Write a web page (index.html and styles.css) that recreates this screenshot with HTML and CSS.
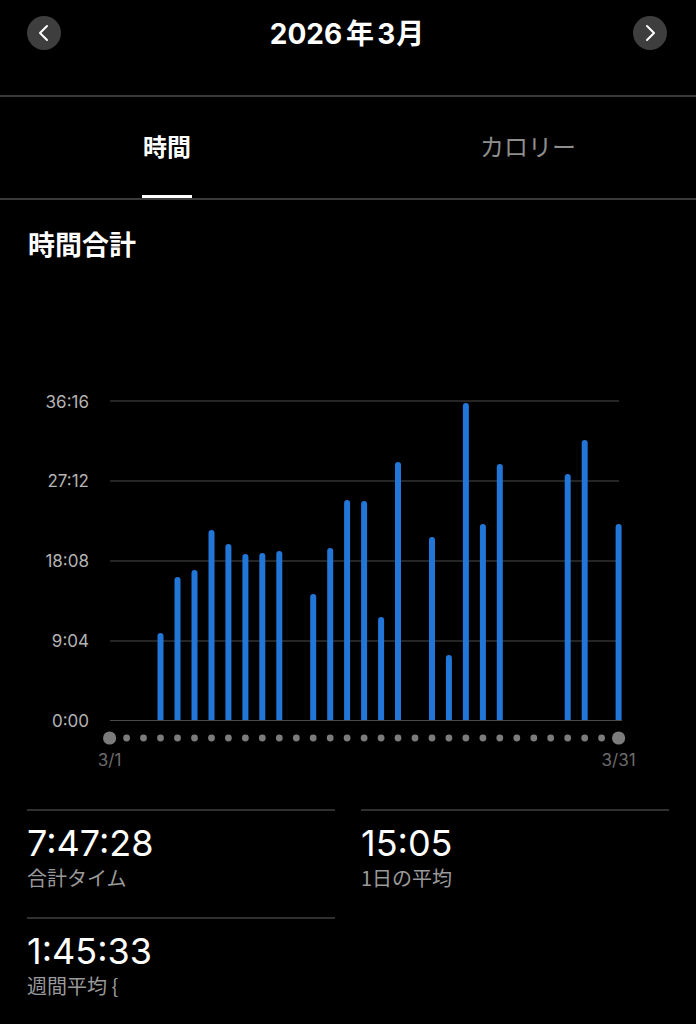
FILE: index.html
```html
<!DOCTYPE html>
<html lang="ja">
<head>
<meta charset="utf-8">
<title>2026年3月</title>
<link rel="stylesheet" href="styles.css">
</head>
<body>
<div class="page">
  <header class="header">
    <button class="nav-btn" aria-label="前へ">
      <svg width="34" height="34" viewBox="0 0 34 34"><path d="M20 10 L13 17 L20 24" fill="none" stroke="#fff" stroke-width="2" stroke-linecap="round" stroke-linejoin="round"/></svg>
    </button>
    <h1 class="month">2026<span class="kanji">年</span>3<span class="kanji2">月</span></h1>
    <button class="nav-btn" aria-label="次へ">
      <svg width="34" height="34" viewBox="0 0 34 34"><path d="M14 10 L21 17 L14 24" fill="none" stroke="#fff" stroke-width="2" stroke-linecap="round" stroke-linejoin="round"/></svg>
    </button>
  </header>

  <nav class="tabs">
    <div class="tab active">時間</div>
    <div class="tab tab-right">カロリー</div>
  </nav>

  <section class="summary">
    <h2 class="section-title">時間合計</h2>
    <svg class="chart" width="696" height="410" viewBox="0 370 696 410">
      <defs>
        <clipPath id="plot"><rect x="0" y="370" width="696" height="350"/></clipPath>
      </defs>
      <g class="grid">
        <line x1="110" y1="401" x2="619" y2="401"/>
        <line x1="110" y1="481" x2="619" y2="481"/>
        <line x1="110" y1="561" x2="619" y2="561"/>
        <line x1="110" y1="641" x2="619" y2="641"/>
        <line x1="110" y1="720.5" x2="622" y2="720.5"/>
      </g>
      <g class="ylabels">
        <text x="89" y="407.5">36:16</text>
        <text x="89" y="487">27:12</text>
        <text x="89" y="567">18:08</text>
        <text x="89" y="647">9:04</text>
        <text x="89" y="726.5">0:00</text>
      </g>
      <g class="bars" clip-path="url(#plot)">
        <line x1="160.5" y1="636" x2="160.5" y2="726"/>
        <line x1="177.5" y1="580" x2="177.5" y2="726"/>
        <line x1="194.5" y1="573" x2="194.5" y2="726"/>
        <line x1="211.5" y1="533" x2="211.5" y2="726"/>
        <line x1="228.4" y1="547" x2="228.4" y2="726"/>
        <line x1="245.4" y1="557" x2="245.4" y2="726"/>
        <line x1="262.3" y1="556" x2="262.3" y2="726"/>
        <line x1="279.3" y1="554" x2="279.3" y2="726"/>
        <line x1="313.2" y1="597" x2="313.2" y2="726"/>
        <line x1="330.2" y1="551" x2="330.2" y2="726"/>
        <line x1="347.1" y1="503" x2="347.1" y2="726"/>
        <line x1="364.1" y1="504" x2="364.1" y2="726"/>
        <line x1="381.1" y1="620" x2="381.1" y2="726"/>
        <line x1="398.0" y1="465" x2="398.0" y2="726"/>
        <line x1="432.0" y1="540" x2="432.0" y2="726"/>
        <line x1="448.9" y1="658" x2="448.9" y2="726"/>
        <line x1="465.9" y1="406" x2="465.9" y2="726"/>
        <line x1="482.9" y1="527" x2="482.9" y2="726"/>
        <line x1="499.8" y1="467" x2="499.8" y2="726"/>
        <line x1="567.7" y1="477" x2="567.7" y2="726"/>
        <line x1="584.7" y1="443" x2="584.7" y2="726"/>
        <line x1="618.6" y1="527" x2="618.6" y2="726"/>
      </g>
      <g class="dots">
        <circle cx="109.6" cy="738" r="6.6"/>
        <circle cx="126.6" cy="738" r="3.4"/>
        <circle cx="143.5" cy="738" r="3.4"/>
        <circle cx="160.5" cy="738" r="3.4"/>
        <circle cx="177.5" cy="738" r="3.4"/>
        <circle cx="194.5" cy="738" r="3.4"/>
        <circle cx="211.5" cy="738" r="3.4"/>
        <circle cx="228.4" cy="738" r="3.4"/>
        <circle cx="245.4" cy="738" r="3.4"/>
        <circle cx="262.3" cy="738" r="3.4"/>
        <circle cx="279.3" cy="738" r="3.4"/>
        <circle cx="296.3" cy="738" r="3.4"/>
        <circle cx="313.2" cy="738" r="3.4"/>
        <circle cx="330.2" cy="738" r="3.4"/>
        <circle cx="347.1" cy="738" r="3.4"/>
        <circle cx="364.1" cy="738" r="3.4"/>
        <circle cx="381.1" cy="738" r="3.4"/>
        <circle cx="398.0" cy="738" r="3.4"/>
        <circle cx="415.0" cy="738" r="3.4"/>
        <circle cx="432.0" cy="738" r="3.4"/>
        <circle cx="448.9" cy="738" r="3.4"/>
        <circle cx="465.9" cy="738" r="3.4"/>
        <circle cx="482.9" cy="738" r="3.4"/>
        <circle cx="499.8" cy="738" r="3.4"/>
        <circle cx="516.8" cy="738" r="3.4"/>
        <circle cx="533.8" cy="738" r="3.4"/>
        <circle cx="550.7" cy="738" r="3.4"/>
        <circle cx="567.7" cy="738" r="3.4"/>
        <circle cx="584.7" cy="738" r="3.4"/>
        <circle cx="601.6" cy="738" r="3.4"/>
        <circle cx="618.6" cy="738" r="6.6"/>
      </g>
      <g class="xlabels">
        <text x="109.6" y="766">3/1</text>
        <text x="618.6" y="766">3/31</text>
      </g>
    </svg>
  </section>

  <section class="stats">
    <div class="stat">
      <div class="value">7:47:28</div>
      <div class="label">合計タイム</div>
    </div>
    <div class="stat">
      <div class="value">15:05</div>
      <div class="label">1日の平均</div>
    </div>
    <div class="stat">
      <div class="value">1:45:33</div>
      <div class="label">週間平均 {</div>
    </div>
  </section>
</div>
</body>
</html>
```
FILE: styles.css
```css
* { box-sizing: border-box; }
html, body {
  margin: 0;
  padding: 0;
  background: #000;
}
body {
  font-family: Inter, "Noto Sans CJK JP", sans-serif;
  color: #fff;
  width: 696px;
  height: 1024px;
  overflow: hidden;
}
.page {
  width: 696px;
}
.header {
  height: 97px;
  border-bottom: 2px solid #3a3a3a;
  display: flex;
  align-items: flex-start;
  justify-content: space-between;
  padding: 16px 29px 0 27px;
}
.nav-btn {
  width: 34px;
  height: 34px;
  border-radius: 50%;
  background: #3e3e3e;
  border: 0;
  padding: 0;
  display: flex;
  align-items: center;
  justify-content: center;
}
.month {
  margin: -2px 0 0;
  font-size: 28px;
  line-height: 36px;
  font-weight: 700;
  letter-spacing: 0;
  font-family: Inter, "Noto Sans CJK JP", sans-serif;
}
.month .kanji { margin: 0 3px 0 4px; font-family: "Noto Sans CJK JP", sans-serif; }
.month .kanji2 { margin-left: 1px; font-family: "Noto Sans CJK JP", sans-serif; }

.tabs {
  display: grid;
  grid-template-columns: 334px 1fr;
  height: 103px;
  border-bottom: 2px solid #3a3a3a;
}
.tab {
  position: relative;
  display: flex;
  align-items: center;
  justify-content: center;
  font-family: "Noto Sans CJK JP", sans-serif;
  font-size: 24px;
  color: #8e8e8e;
  padding-bottom: 5px;
}
.tab-right { padding-left: 26px; }
.tab.active {
  color: #fff;
  font-weight: 700;
}
.tab.active::after {
  content: "";
  position: absolute;
  left: 50%;
  bottom: 0;
  width: 50px;
  height: 3px;
  margin-left: -25px;
  background: #fff;
}

.section-title {
  margin: 28px 0 0 28px;
  font-family: "Noto Sans CJK JP", sans-serif;
  font-size: 27px;
  line-height: 32px;
  font-weight: 700;
  height: 32px;
}
.chart {
  display: block;
  margin-top: 110px;
}
.grid line {
  stroke: #4a4a4a;
  stroke-width: 1.2;
}
.ylabels text {
  fill: #b3b3b3;
  font-family: Inter, sans-serif;
  font-size: 17px;
  text-anchor: end;
}
.bars line {
  stroke: #2176d8;
  stroke-width: 6;
  stroke-linecap: round;
}
.dots circle {
  fill: #7c7c7c;
}
.xlabels text {
  fill: #6c6c6c;
  font-family: Inter, sans-serif;
  font-size: 17px;
  text-anchor: middle;
}

.stats {
  display: grid;
  grid-template-columns: 308px 308px;
  column-gap: 26px;
  padding-left: 27px;
  margin-top: 29px;
}
.stat {
  border-top: 2px solid #303030;
  padding: 11px 0 25px;
  height: 108px;
}
.value {
  font-family: Inter, sans-serif;
  font-size: 36px;
  line-height: 42px;
  font-weight: 400;
}
.label {
  margin-top: 2px;
  font-family: "Noto Sans CJK JP", sans-serif;
  font-size: 20px;
  line-height: 24px;
  color: #9a9a9a;
}
```
